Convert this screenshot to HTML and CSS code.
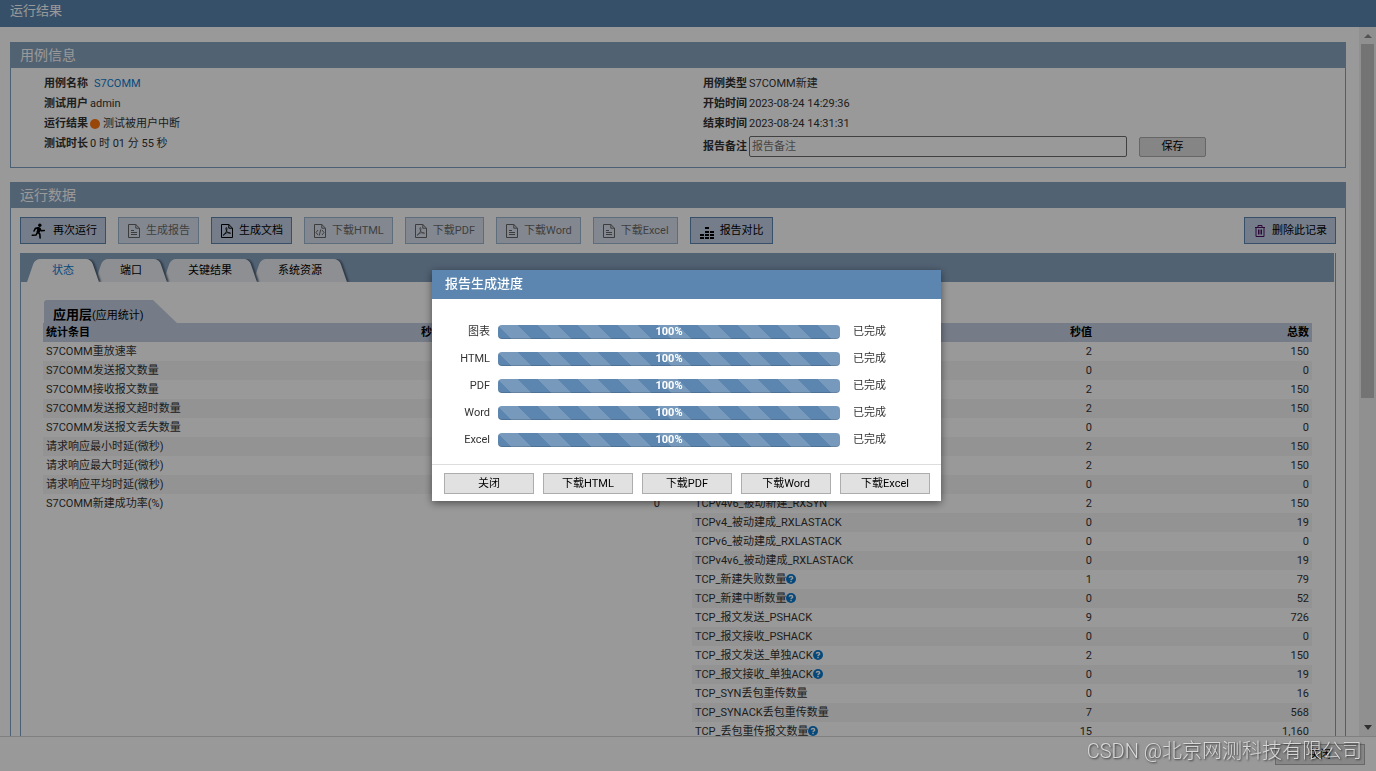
FILE: index.html
```html
<!DOCTYPE html>
<html lang="zh-CN">
<head>
<meta charset="utf-8">
<title>运行结果</title>
<link rel="stylesheet" href="styles.css">
</head>
<body>
<svg class="defs" aria-hidden="true">
  <symbol id="doc" viewBox="0 0 12 14"><path d="M.5.5h7.3l3.7 3.7v9.3H.5zM7.8.5v3.7h3.7" fill="none" stroke="currentColor"/><path d="M3 6.5h3M3 8.500h6M3 10.500h6" stroke="currentColor"/></symbol>
  <symbol id="pdf" viewBox="0 0 12 14"><path d="M.5.5h7.300l3.700 3.700v9.300H.500zM7.800.500v3.700h3.700" fill="none" stroke="currentColor"/><path d="M5.200 3.500c1.200 0 .800 2.500.100 4C4.500 9.500 3 11.700 2.300 11.300c-.700-.600 1.500-1.900 3-2.300 1.700-.500 3.900-.600 4.200 0 .300.800-2 .400-3.200-.900C5.200 7 4.500 3.800 5.200 3.500z" fill="none" stroke="currentColor" stroke-width=".8"/></symbol>
  <symbol id="code" viewBox="0 0 12 14"><path d="M.5.5h7.300l3.700 3.700v9.300H.500zM7.800.500v3.700h3.700" fill="none" stroke="currentColor"/><path d="M4 6 2 8.500 4 11M8 6l2 2.500L8 11M6.700 5.500l-1.400 6" fill="none" stroke="currentColor"/></symbol>
  <symbol id="run" viewBox="0 0 16 18"><circle cx="9.500" cy="2.500" r="1.900"/><path d="M8.500 5.500 6.800 10l2.700 2.500.3 4.300M6.800 10.500l-1.500 3-4.300.3M8 5.500 4.500 6 3 9M9 6l2 2.800 3.500-.3" fill="none" stroke="currentColor" stroke-width="1.800" stroke-linecap="round" stroke-linejoin="round"/><path d="m7 4.500 3.500 1L9.500 11l-3.500-1z"/></symbol>
  <symbol id="bars" viewBox="0 0 14 14"><path d="M0 8h4v2H0zM0 11h4v2H0zM5 1h4v2H5zM5 5h4v2H5zM5 8h4v2H5zM5 11h4v2H5zM10 5h4v2h-4zM10 8h4v2h-4zM10 11h4v2h-4z"/></symbol>
  <symbol id="trash" viewBox="0 0 12 14"><path d="M1 3.500h10M4 3V1.500h4V3M2 3.500V12.500h8V3.500M4.500 5.500v5M6 5.500v5M7.500 5.500v5" fill="none" stroke="currentColor"/></symbol>
  <symbol id="help" viewBox="0 0 10 10"><circle cx="5" cy="5" r="5" fill="#0a79cc"/><path d="M3.300 3.800C3.400 2 6.700 2 6.700 3.900 6.700 5 5 4.900 5 6.200M5 7v1.300" fill="none" stroke="#fff" stroke-width="1.400"/></symbol>
</svg>

<div class="app">
  <header class="topbar">运行结果</header>
  <div class="viewport">
    <main class="content">
      <section class="panel">
        <h2 class="panel-title">用例信息</h2>
        <div class="info">
          <dl class="info-list">
            <div class="info-row"><dt>用例名称</dt><dd class="link-cell"><a href="#">S7COMM</a></dd></div>
            <div class="info-row"><dt>测试用户</dt><dd>admin</dd></div>
            <div class="info-row"><dt>运行结果</dt><dd class="status"><span class="dot"></span>测试被用户中断</dd></div>
            <div class="info-row"><dt>测试时长</dt><dd>0 时 01 分 55 秒</dd></div>
          </dl>
          <div class="info-side">
            <dl class="info-list">
              <div class="info-row"><dt>用例类型</dt><dd>S7COMM新建</dd></div>
              <div class="info-row"><dt>开始时间</dt><dd>2023-08-24 14:29:36</dd></div>
              <div class="info-row"><dt>结束时间</dt><dd>2023-08-24 14:31:31</dd></div>
            </dl>
            <div class="remark">
              <label for="remark">报告备注</label>
              <input id="remark" type="text" placeholder="报告备注">
              <button class="save" type="button">保存</button>
            </div>
          </div>
        </div>
      </section>

      <section class="panel">
        <h2 class="panel-title">运行数据</h2>
        <div class="toolbar">
          <button class="tool" type="button"><svg class="icon-run"><use href="#run"/></svg>再次运行</button>
          <button class="tool" type="button" disabled><svg class="icon"><use href="#doc"/></svg>生成报告</button>
          <button class="tool" type="button"><svg class="icon"><use href="#pdf"/></svg>生成文档</button>
          <button class="tool" type="button" disabled><svg class="icon"><use href="#code"/></svg>下载HTML</button>
          <button class="tool" type="button" disabled><svg class="icon"><use href="#pdf"/></svg>下载PDF</button>
          <button class="tool" type="button" disabled><svg class="icon"><use href="#doc"/></svg>下载Word</button>
          <button class="tool" type="button" disabled><svg class="icon"><use href="#doc"/></svg>下载Excel</button>
          <button class="tool" type="button"><svg class="icon-bars"><use href="#bars"/></svg>报告对比</button>
          <button class="tool tool-end" type="button"><svg class="icon icon-trash"><use href="#trash"/></svg>删除此记录</button>
        </div>
        <div class="tabbox">
          <nav class="tabs">
            <button class="tab active" type="button"><span>状态</span></button>
            <button class="tab" type="button"><span>端口</span></button>
            <button class="tab" type="button"><span>关键结果</span></button>
            <button class="tab" type="button"><span>系统资源</span></button>
          </nav>
          <div class="tables">
            <div class="stat">
              <h3 class="stat-title">应用层<small>(应用统计)</small></h3>
              <table>
                <thead><tr><th class="name">统计条目</th><th class="rate">秒值</th><th>总数</th></tr></thead>
                <tbody>
                  <tr><td>S7COMM重放速率</td><td></td><td></td></tr>
                  <tr><td>S7COMM发送报文数量</td><td></td><td></td></tr>
                  <tr><td>S7COMM接收报文数量</td><td></td><td></td></tr>
                  <tr><td>S7COMM发送报文超时数量</td><td></td><td></td></tr>
                  <tr><td>S7COMM发送报文丢失数量</td><td></td><td></td></tr>
                  <tr><td>请求响应最小时延(微秒)</td><td></td><td></td></tr>
                  <tr><td>请求响应最大时延(微秒)</td><td></td><td></td></tr>
                  <tr><td>请求响应平均时延(微秒)</td><td></td><td></td></tr>
                  <tr><td>S7COMM新建成功率(%)</td><td></td><td>0</td></tr>
                </tbody>
              </table>
            </div>
            <div class="stat">
              <div class="stat-title"></div>
              <table>
                <thead><tr><th class="name">统计条目</th><th class="rate">秒值</th><th>总数</th></tr></thead>
                <tbody>
                  <tr><td></td><td>2</td><td>150</td></tr>
                  <tr><td></td><td>0</td><td>0</td></tr>
                  <tr><td></td><td>2</td><td>150</td></tr>
                  <tr><td></td><td>2</td><td>150</td></tr>
                  <tr><td></td><td>0</td><td>0</td></tr>
                  <tr><td></td><td>2</td><td>150</td></tr>
                  <tr><td></td><td>2</td><td>150</td></tr>
                  <tr><td></td><td>0</td><td>0</td></tr>
                  <tr><td>TCPv4v6_被动新建_RXSYN</td><td>2</td><td>150</td></tr>
                  <tr><td>TCPv4_被动建成_RXLASTACK</td><td>0</td><td>19</td></tr>
                  <tr><td>TCPv6_被动建成_RXLASTACK</td><td>0</td><td>0</td></tr>
                  <tr><td>TCPv4v6_被动建成_RXLASTACK</td><td>0</td><td>19</td></tr>
                  <tr><td>TCP_新建失败数量<svg class="help"><use href="#help"/></svg></td><td>1</td><td>79</td></tr>
                  <tr><td>TCP_新建中断数量<svg class="help"><use href="#help"/></svg></td><td>0</td><td>52</td></tr>
                  <tr><td>TCP_报文发送_PSHACK</td><td>9</td><td>726</td></tr>
                  <tr><td>TCP_报文接收_PSHACK</td><td>0</td><td>0</td></tr>
                  <tr><td>TCP_报文发送_单独ACK<svg class="help"><use href="#help"/></svg></td><td>2</td><td>150</td></tr>
                  <tr><td>TCP_报文接收_单独ACK<svg class="help"><use href="#help"/></svg></td><td>0</td><td>19</td></tr>
                  <tr><td>TCP_SYN丢包重传数量</td><td>0</td><td>16</td></tr>
                  <tr><td>TCP_SYNACK丢包重传数量</td><td>7</td><td>568</td></tr>
                  <tr><td>TCP_丢包重传报文数量<svg class="help"><use href="#help"/></svg></td><td>15</td><td>1,160</td></tr>
                </tbody>
              </table>
            </div>
          </div>
        </div>
      </section>
    </main>
    <div class="scrollbar" aria-hidden="true"><i class="arrow up"></i><i class="thumb"></i><i class="arrow down"></i></div>
  </div>
  <footer class="bottombar"><button class="btn" type="button">关闭</button></footer>
</div>

<div class="overlay">
  <div class="dialog" role="dialog" aria-labelledby="dialog-title">
    <h2 class="dialog-title" id="dialog-title">报告生成进度</h2>
    <div class="progress-list">
      <div class="progress-row"><span class="label">图表</span><div class="bar" role="progressbar" aria-label="图表" aria-valuenow="100">100%</div><span>已完成</span></div>
      <div class="progress-row"><span class="label">HTML</span><div class="bar" role="progressbar" aria-label="HTML" aria-valuenow="100">100%</div><span>已完成</span></div>
      <div class="progress-row"><span class="label">PDF</span><div class="bar" role="progressbar" aria-label="PDF" aria-valuenow="100">100%</div><span>已完成</span></div>
      <div class="progress-row"><span class="label">Word</span><div class="bar" role="progressbar" aria-label="Word" aria-valuenow="100">100%</div><span>已完成</span></div>
      <div class="progress-row"><span class="label">Excel</span><div class="bar" role="progressbar" aria-label="Excel" aria-valuenow="100">100%</div><span>已完成</span></div>
    </div>
    <div class="dialog-actions">
      <button class="btn" type="button">关闭</button>
      <button class="btn" type="button">下载HTML</button>
      <button class="btn" type="button">下载PDF</button>
      <button class="btn" type="button">下载Word</button>
      <button class="btn" type="button">下载Excel</button>
    </div>
  </div>
</div>
<div class="watermark">CSDN @北京网测科技有限公司</div>
</body>
</html>
```

FILE: styles.css
```css
* { box-sizing: border-box; }
body { margin: 0; color: #333; font: 11px/19px Roboto, "Noto Sans CJK SC", sans-serif; }
button, input { font: inherit; color: #000; }
h2, h3, dl, dd { margin: 0; }
.defs { position: absolute; width: 0; height: 0; }

.app { display: flex; flex-direction: column; height: 100vh; overflow: hidden; }
.topbar { flex: none; height: 27px; padding-left: 10px; background: #5c86af; color: #fff; font-size: 13px; line-height: 21px; }
.viewport { flex: 1; min-height: 0; display: flex; }
.content { flex: 1; min-width: 0; overflow: hidden; padding: 15px 13px 0 10px; display: flex; flex-direction: column; gap: 14px; }

.panel { flex: none; border: 1px solid #7d9fc3; border-top: 0; }
.panel-title { margin: 0 -1px; padding-left: 10px; background: #87a3c0; color: #fff; font-size: 14px; font-weight: 400; line-height: 26px; }

.info { display: grid; grid-template-columns: 1fr 1fr; padding: 6px 0 10px; }
.info > .info-list { padding-left: 33px; }
.info-side { padding-left: 25px; }
.info-row { display: flex; gap: 2px; line-height: 20px; }
.info-row dt, .remark label { font-weight: 700; }
.link-cell { padding-left: 4px; }
.status { display: flex; align-items: center; gap: 3px; }
.dot { width: 10px; height: 10px; border-radius: 50%; background: #ff7510; }
a { color: #0c7cd2; text-decoration: none; }
.remark { display: flex; align-items: center; gap: 2px; margin-top: 2px; }
.remark input { width: 378px; height: 21px; padding: 0 2px; border: 1px solid #6d6d6d; border-radius: 2px; background: #fff; }
.remark input::placeholder { color: #757575; }
.save { width: 67px; height: 20px; margin-left: 10px; padding: 0; border: 1px solid #aaa; border-radius: 2px; background: #dedede; line-height: 18px; }

.toolbar { display: flex; gap: 12px; padding: 9px; }
.tool { display: flex; align-items: center; gap: 6px; height: 27px; padding: 0 8px 0 9px; border: 1px solid #5c86af; background: #c3d0e6; }
.tool:disabled { opacity: .6; }
.tool-end { margin-left: auto; }
.icon { width: 12px; height: 14px; }
.icon-run { width: 17px; height: 16px; }
.icon-bars { width: 14px; height: 14px; margin-top: 4px; }
.icon-trash { color: #4a0d5c; }

.tabbox { margin: 0 9px; border: solid #7d9fc3; border-width: 0 1px; }
.tabs { display: flex; align-items: flex-end; height: 29px; margin: 0 1px 0 -1px; padding-left: 11px; background: #87a3c0; }
.tab { position: relative; height: 23px; margin-right: 4px; padding: 0 21px; border: 0; background: none; }
.tab span { position: relative; z-index: 1; }
.tab:nth-child(1) { z-index: 4; }
.tab:nth-child(2) { z-index: 3; }
.tab:nth-child(3) { z-index: 2; }
.tab:nth-child(4) { z-index: 1; }
.tab::before, .tab::after { content: ""; position: absolute; top: 0; bottom: 0; background: #edeff3; }
.tab::before { left: 0; right: 12px; border-radius: 5px 0 0 0; transform: skewX(-19deg); }
.tab::after { left: 12px; right: 0; border-radius: 0 5px 0 0; transform: skewX(19deg); box-shadow: 2px 0 2px #4b5f75; clip-path: inset(0 -5px 0 0); }
.tab.active { color: #0c7cd2; }
.tab.active::before, .tab.active::after { background: #fff; }

.tables { display: grid; grid-template-columns: 1fr 1fr; gap: 29px; padding: 18px 23px 0 22px; }
.stat-title { width: 133px; height: 23px; margin-left: 1px; padding: 5px 0 0 9px; background: #c3cfe1; color: #000; font-size: 13px; line-height: 19px; white-space: nowrap; border-radius: 3px 0 0 0; clip-path: polygon(0 0, 109px 0, 100% 100%, 0 100%); }
.stat-title small { font-size: 11px; font-weight: 400; }
table { width: 100%; border-collapse: collapse; table-layout: fixed; }
th { background: #c3cfe1; color: #000; }
th, td { height: 19px; padding: 0 3px; line-height: 19px; text-align: right; white-space: nowrap; }
th:first-child, td:first-child { text-align: left; }
.name { width: 50%; }
.rate { width: 15%; }
tbody tr:nth-child(even) { background: #f6f6f6; }
.help { width: 10px; height: 10px; vertical-align: -1px; }

.scrollbar { flex: none; display: flex; flex-direction: column; align-items: center; width: 17px; background: #f1f1f1; }
.arrow { width: 0; height: 0; border: solid transparent; border-width: 0 4px; }
.up { margin: 7px 0 6px; border-bottom: 4px solid #8b8b8b; }
.thumb { width: 13px; height: 354px; background: #c1c1c1; }
.down { margin: auto 0 6px; border-top: 5px solid #505050; }
.bottombar { flex: none; display: flex; justify-content: flex-end; height: 35px; padding: 7px 11px; border-top: 1px solid #d5d5d5; }
.btn { width: 90px; height: 21px; padding: 1px 0 0; border: 1px solid #adadad; background: #e1e1e1; line-height: 18px; }

.overlay { position: fixed; inset: 0; z-index: 10; display: flex; align-items: center; justify-content: center; padding-right: 3px; background: rgba(0, 0, 0, .4); }
.dialog { width: 509px; background: #fff; box-shadow: 0 2px 8px rgba(0, 0, 0, .5); }
.dialog-title { padding: 0 0 2px 13px; background: #5c86af; color: #fff; font-size: 13px; font-weight: 500; line-height: 27px; }
.progress-list { display: grid; gap: 8px; padding: 23px 12px 15px; }
.progress-row { display: grid; grid-template-columns: 46px 342px 1fr; column-gap: 8px; align-items: center; }
.progress-row > :last-child { padding-left: 5px; }
.label { text-align: right; }
.bar { height: 14px; border-radius: 4px; background: #5c86af linear-gradient(45deg, rgba(255, 255, 255, .17) 25%, transparent 25%, transparent 50%, rgba(255, 255, 255, .17) 50%, rgba(255, 255, 255, .17) 75%, transparent 75%) 0 0 / 40px 40px; box-shadow: inset 0 -1px 0 rgba(0, 0, 0, .15); color: #fff; font-weight: 700; line-height: 13px; text-align: center; }
.dialog-actions { display: flex; gap: 9px; padding: 8px 11px 7px 12px; border-top: 1px solid #ddd; }

.watermark { position: fixed; z-index: 20; right: 14px; bottom: 5px; color: #d8d8d8; font-size: 20px; font-weight: 300; line-height: 29px; text-shadow: 1px 1px 2px #333; }
```
